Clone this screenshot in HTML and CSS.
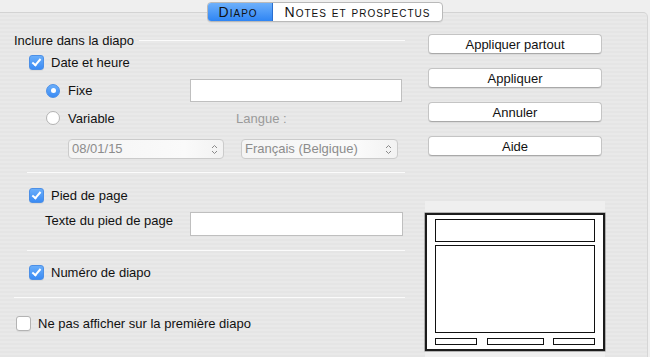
FILE: index.html
```html
<!DOCTYPE html>
<html lang="fr">
<head>
  <meta charset="UTF-8" />
  <title>En-tête et pied de page</title>
  <link rel="stylesheet" href="styles.css">
</head>
<body>
  <div class="tabs-bar">
    <div class="tabs">
      <span class="tab active">Diapo</span>
      <span class="tab">Notes et prospectus</span>
    </div>
  </div>

  <div class="panel">
    <div class="left">
      <div class="group-title"><span>Inclure dans la diapo</span></div>

      <div class="row row-date">
        <span class="check on"></span>
        <span>Date et heure</span>
      </div>

      <div class="row row-fixe">
        <div class="choice">
          <span class="radio on"></span>
          <span>Fixe</span>
        </div>
        <div class="field field-fixe"></div>
      </div>

      <div class="row row-variable">
        <div class="choice">
          <span class="radio"></span>
          <span>Variable</span>
        </div>
        <span class="muted">Langue :</span>
      </div>

      <div class="row row-popups">
        <div class="popup popup-date">
          <span>08/01/15</span>
          <svg width="7" height="11" viewBox="0 0 7 11"><path d="M1 4 L3.5 1.5 L6 4 M1 7 L3.5 9.5 L6 7" fill="none" stroke="#8a8a8a" stroke-width="1"/></svg>
        </div>
        <div class="popup popup-lang">
          <span>Français (Belgique)</span>
          <svg width="7" height="11" viewBox="0 0 7 11"><path d="M1 4 L3.5 1.5 L6 4 M1 7 L3.5 9.5 L6 7" fill="none" stroke="#8a8a8a" stroke-width="1"/></svg>
        </div>
      </div>

      <div class="sep sep-1"></div>

      <div class="row row-pied">
        <span class="check on"></span>
        <span>Pied de page</span>
      </div>

      <div class="row row-texte">
        <span class="texte-label">Texte du pied de page</span>
        <div class="field field-pied"></div>
      </div>

      <div class="sep sep-2"></div>

      <div class="row row-numero">
        <span class="check on"></span>
        <span>Numéro de diapo</span>
      </div>

      <div class="sep sep-3"></div>

      <div class="row row-premiere">
        <span class="check"></span>
        <span>Ne pas afficher sur la première diapo</span>
      </div>
    </div>

    <div class="right">
      <div class="buttons">
        <button>Appliquer partout</button>
        <button>Appliquer</button>
        <button>Annuler</button>
        <button>Aide</button>
      </div>

      <div class="preview">
        <div class="slide">
          <div class="slide-title"></div>
          <div class="slide-body"></div>
          <div class="slide-footer">
            <span class="foot-date"></span>
            <span class="foot-text"></span>
            <span class="foot-num"></span>
          </div>
        </div>
      </div>
    </div>
  </div>
</body>
</html>
```

FILE: styles.css
```css
body { margin: 0; background: #efefef; font-family: "Liberation Sans", Arial, sans-serif; font-size: 13px; color: #111; height: 357px; overflow: hidden; }

.tabs-bar { display: flex; justify-content: center; padding-top: 2px; }
.tabs { position: relative; z-index: 1; display: flex; height: 18px; border: 1px solid #b9b9b9; border-radius: 4px; background: #fff; overflow: hidden; box-shadow: 0 1px 0 rgba(0,0,0,0.05); }
.tab { font-variant: small-caps; font-size: 14px; letter-spacing: 1px; line-height: 18px; }
.tab.active { background: linear-gradient(#6db0fb, #2f85f4); border-right: 1px solid #2a6fd0; padding: 0 14px 0 11px; }
.tab + .tab { padding: 0 12px 0 12px; }

.panel { margin: -10px 2px 0 0; border-top: 1px solid #d3d3d3; border-right: 1px solid #d6d6d6; border-top-right-radius: 5px; height: 345px; box-sizing: border-box; padding: 19px 0 0 14px; display: flex; gap: 20px;
  background: repeating-linear-gradient(#e9e9e9 0 2px, #e5e5e5 2px 4px); }

.left { width: 391px; display: flex; flex-direction: column; }
.group-title { display: flex; align-items: center; height: 16px; gap: 5px; }
.group-title::after { content: ""; flex: 1; height: 1px; background: #fbfbfb; }

.row { display: flex; align-items: center; height: 16px; gap: 7px; }
.row-date { margin: 6px 0 0 15px; }
.row-fixe { margin: 9px 0 0 32px; height: 23px; gap: 0; }
.row-variable { margin: 8px 0 0 32px; gap: 0; }
.row-popups { margin: 13px 0 0 54px; height: 20px; gap: 17px; }
.row-pied { margin: 14px 0 0 15px; }
.row-texte { margin: 9px 0 0 31px; height: 24px; align-items: flex-start; gap: 0; }
.row-numero { margin: 13px 0 0 15px; }
.row-premiere { margin: 17px 0 0 2px; }

.choice { width: 144px; display: flex; align-items: center; gap: 8px; }
.muted { color: #9a9a9a; margin-left: 46px; }
.texte-label { width: 145px; padding-top: 1px; }

.check { width: 13px; height: 13px; border: 1px solid #b3b3b3; border-radius: 3px; background: #fff; box-shadow: 0 1px 0 rgba(0,0,0,0.05); display: flex; align-items: center; justify-content: center; }
.check.on { background: linear-gradient(#6aaefa, #3a8bf4); border-color: #4c8fe6; }
.check.on::after { content: ""; width: 3px; height: 7px; border: solid #fff; border-width: 0 2px 2px 0; transform: translate(0, -1px) rotate(40deg); }

.radio { width: 14px; height: 14px; border: 1px solid #b3b3b3; border-radius: 50%; background: #fff; box-sizing: border-box; display: flex; align-items: center; justify-content: center; }
.radio.on { background: linear-gradient(#6aaefa, #3a8bf4); border-color: #4c8fe6; }
.radio.on::after { content: ""; width: 5px; height: 5px; border-radius: 50%; background: #fff; }

.field { height: 21px; background: #fff; border: 1px solid #bfbfbf; }
.field-fixe { width: 210px; }
.field-pied { width: 211px; height: 22px; }

.popup { height: 18px; border: 1px solid #cbcbcb; border-radius: 4px; background: linear-gradient(90deg, #f4f4f4, #fafafa 75%, #f2f2f2); display: flex; align-items: center; justify-content: space-between; padding: 0 5px 0 3px; color: #8c8c8c; box-sizing: content-box; }
.popup span { margin-top: -1px; }
.popup-date { width: 146px; }
.popup-lang { width: 147px; }

.sep { height: 1px; background: #fbfbfb; }
.sep-1 { margin: 13px 0 0 13px; }
.sep-2 { margin: 14px 0 0 13px; }
.sep-3 { margin: 17px 0 0 0; }

.right { width: 180px; display: flex; flex-direction: column; }
.buttons { display: flex; flex-direction: column; gap: 14px; margin: 2px 0 0 3px; }
.buttons button { width: 174px; height: 20px; font: inherit; color: #111; background: #fff; border: 1px solid #c4c4c4; border-bottom-color: #a9a9a9; border-radius: 4px; padding: 0; box-shadow: 0 1px 0 rgba(0,0,0,0.06); }

.preview { margin-top: 45px; background: #efefef; padding-top: 12px; flex: 1; }
.slide { height: 130px; border: 2px solid #1c1c1c; box-shadow: 0 0 0 0.5px #777; background: #fff; padding: 4px 8px 0; display: flex; flex-direction: column; }
.slide-title { height: 21px; border: 1px solid #111; }
.slide-body { height: 86px; border: 1px solid #111; margin-top: 3px; }
.slide-footer { display: flex; justify-content: space-between; margin-top: 5px; }
.slide-footer span { height: 5px; border: 1px solid #111; }
.foot-date, .foot-num { width: 40px; }
.foot-text { width: 55px; }
```
